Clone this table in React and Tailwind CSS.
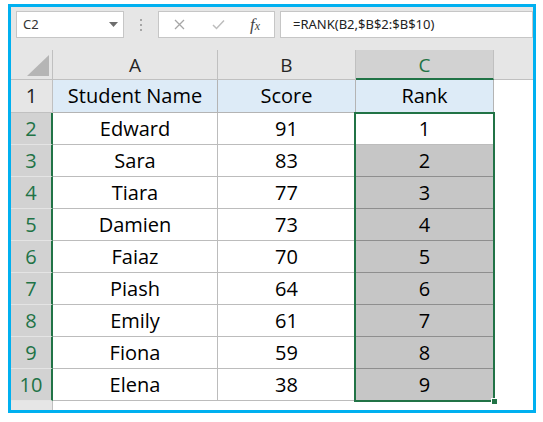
const rows = [
  ["Edward", 91, 1],
  ["Sara", 83, 2],
  ["Tiara", 77, 3],
  ["Damien", 73, 4],
  ["Faiaz", 70, 5],
  ["Piash", 64, 6],
  ["Emily", 61, 7],
  ["Fiona", 59, 8],
  ["Elena", 38, 9],
];

const sheetFont = "font-['Open_Sans',sans-serif]";

function Toolbar() {
  return (
    <div className="h-[43px] flex items-start pt-[4px] pl-[5px] font-['Noto_Sans',sans-serif]">
      <div className="w-[108px] h-[27px] bg-white border border-[#c6c6c6] flex items-center justify-between pl-[6px] pr-[5px]">
        <span className="text-[13px] text-[#333]">C2</span>
        <svg width="9" height="5" viewBox="0 0 9 5">
          <path d="M0 0 L9 0 L4.5 5 Z" fill="#6d6d6d" />
        </svg>
      </div>
      <div className="w-[34px] h-[27px] flex flex-col items-center justify-center gap-[3px]">
        <span className="w-[2px] h-[2px] bg-[#a6a6a6]" />
        <span className="w-[2px] h-[2px] bg-[#a6a6a6]" />
        <span className="w-[2px] h-[2px] bg-[#a6a6a6]" />
      </div>
      <div className="w-[117px] h-[27px] bg-white border border-[#c6c6c6] flex items-center pl-[15px]">
        <svg width="11" height="11" viewBox="0 0 11 11">
          <path d="M1 1 L10 10 M10 1 L1 10" stroke="#a6a6a6" strokeWidth="1.3" fill="none" />
        </svg>
        <svg width="13" height="11" viewBox="0 0 13 11" className="ml-[27px]">
          <path d="M1 6 L4.5 9.5 L12 1.5" stroke="#bdbdbd" strokeWidth="1.5" fill="none" />
        </svg>
        <span className="ml-[25px] italic font-['Liberation_Serif',serif] text-[17px] text-[#444] leading-none">
          f<span className="text-[12px]">x</span>
        </span>
      </div>
      <div className="flex-1 ml-[5px] h-[27px] bg-white border border-[#c6c6c6] flex items-center pl-[12px]">
        <span className="text-[13px] text-[#222]">=RANK(B2,$B$2:$B$10)</span>
      </div>
    </div>
  );
}

function RowHeaders() {
  return (
    <div className="w-[42px] flex flex-col">
      <div className="h-[30px] border-r border-b border-[#c0c0c0] flex items-end justify-end pr-[3px] pb-[3px]">
        <svg width="22" height="21" viewBox="0 0 22 21">
          <path d="M22 0 L22 21 L0 21 Z" fill="#b5b5b5" />
        </svg>
      </div>
      <div className="h-[33px] border-r border-b border-[#c0c0c0] flex items-center justify-center text-[20px] text-[#222]">
        1
      </div>
      {rows.map((r, i) => (
        <div
          key={i}
          className="h-[32px] bg-[#d2d2d2] border-r-2 border-r-[#217346] border-b border-b-[#e4e4e4] flex items-center justify-center text-[20px] text-[#217346]"
        >
          {i + 2}
        </div>
      ))}
      <div className="flex-1 border-r border-[#c0c0c0]" />
    </div>
  );
}

function DataColumn({ width, letter, title, values }) {
  return (
    <div className={`${width} flex flex-col`}>
      <div className="h-[30px] border-r border-b border-[#c0c0c0] flex items-center justify-center pt-[2px] text-[19px] text-[#262626]">
        {letter}
      </div>
      <div className="h-[33px] bg-[#ddebf7] border-r border-b border-[#b4b4b4] flex items-center justify-center text-[20px] text-black">
        {title}
      </div>
      {values.map((v, i) => (
        <div
          key={i}
          className="h-[32px] bg-white border-r border-b border-[#bcbcbc] flex items-center justify-center text-[20px] text-black"
        >
          {v}
        </div>
      ))}
      <div className="flex-1 bg-white" />
    </div>
  );
}

function RankColumn() {
  return (
    <div className="w-[138px] flex flex-col">
      <div className="h-[30px] bg-[#d2d2d2] border-r border-r-[#c0c0c0] border-b-2 border-b-[#217346] flex items-center justify-center pt-[2px] text-[19px] text-[#217346]">
        C
      </div>
      <div className="h-[33px] bg-[#ddebf7] border-r border-b border-[#b4b4b4] flex items-center justify-center text-[20px] text-black">
        Rank
      </div>
      <div className="relative flex flex-col">
        {rows.map((r, i) => (
          <div
            key={i}
            className={`h-[32px] border-b border-r flex items-center justify-center text-[20px] text-black ${
              i === 0 ? "bg-white border-[#bcbcbc]" : "bg-[#c6c6c6] border-[#8e8e8e]"
            }`}
          >
            {r[2]}
          </div>
        ))}
        <div className="absolute -left-[2px] -top-[1px] -right-[1px] -bottom-[1px] border-2 border-[#217346] pointer-events-none" />
        <div className="absolute -right-[4px] -bottom-[4px] w-[7px] h-[7px] bg-[#217346] border border-white" />
      </div>
      <div className="flex-1 bg-white" />
    </div>
  );
}

export default function App() {
  return (
    <div className={`w-[543px] h-[422px] bg-white pt-[4px] pl-[8px] ${sheetFont}`}>
      <div className="w-[528px] h-[409px] border-[3px] border-[#00b0f0] bg-[#e6e6e6] flex flex-col overflow-hidden">
        <Toolbar />
        <div className="flex flex-1">
          <RowHeaders />
          <DataColumn width="w-[165px]" letter="A" title="Student Name" values={rows.map((r) => r[0])} />
          <DataColumn width="w-[138px]" letter="B" title="Score" values={rows.map((r) => r[1])} />
          <RankColumn />
          <div className="flex-1 flex flex-col">
            <div className="h-[30px] border-b border-[#c0c0c0]" />
            <div className="flex-1 bg-white" />
          </div>
        </div>
      </div>
    </div>
  );
}
